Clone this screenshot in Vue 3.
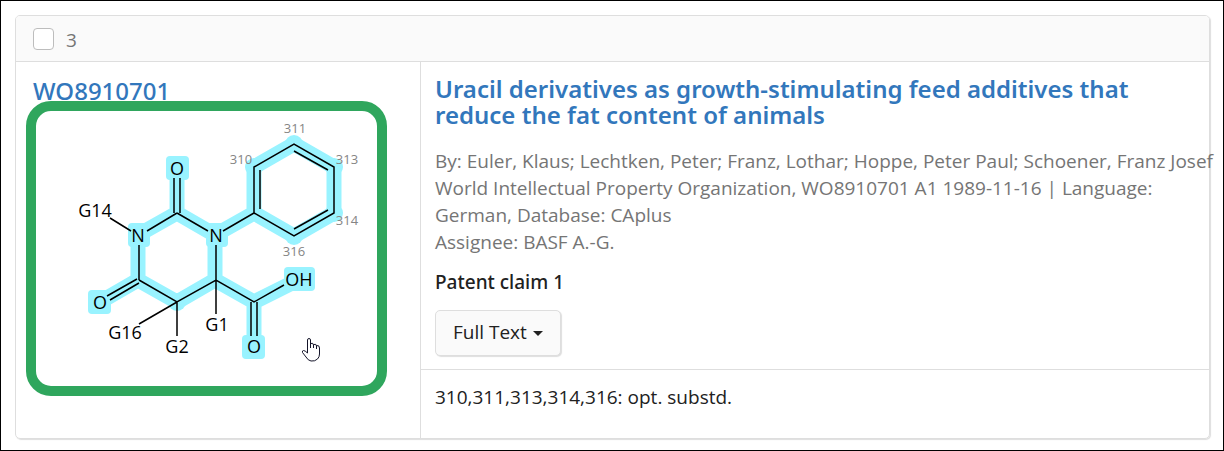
<script setup>
import { ref } from 'vue'

const selected = ref(false)

const highlightPath =
  'M177 168V213L138 235V280L100 302M177 213L215 235V280L177 302L138 280M215 280L254 302V346M254 302L298 280M215 235L254 213V167L294 144L334 167V213L294 236L254 213'

const halos = [
  [254, 167], [294, 144], [334, 167], [334, 213], [294, 236], [177, 302],
]

const boxes = [
  { x: 166, y: 156, w: 23 },
  { x: 128, y: 223, w: 22 },
  { x: 206, y: 223, w: 22 },
  { x: 88, y: 290, w: 23 },
  { x: 242, y: 335, w: 23 },
  { x: 284, y: 267, w: 31 },
]

const bonds =
  'M174 178V213M180 178V213M177 213L147 231M177 213L208 231M110 218L131 231M139 245V280M216 245V280M137 279L107 296M139 283L110 300M139 280L177 302L216 280L254 302L284 285M216 280V314M177 302V336M177 302L139 324M251 302V336M257 302V336M223 231L254 213V167L294 144L334 167V213L294 236L254 213M260 170V209M294 151L328 170M328 210L294 229'

const atoms = [
  { t: 'O', x: 177, y: 175 }, { t: 'G14', x: 95, y: 217 },
  { t: 'N', x: 138, y: 242 }, { t: 'N', x: 216, y: 242 },
  { t: 'O', x: 100, y: 309 }, { t: 'OH', x: 299, y: 286 },
  { t: 'O', x: 254, y: 353 }, { t: 'G16', x: 125, y: 339 },
  { t: 'G2', x: 177, y: 353 }, { t: 'G1', x: 217, y: 331 },
]

const locants = [
  { t: '311', x: 295, y: 133 }, { t: '310', x: 241, y: 164 },
  { t: '313', x: 347, y: 164 }, { t: '314', x: 347, y: 225 },
  { t: '316', x: 294, y: 256 },
]
</script>

<template>
  <main class="page">
    <article class="card">
      <header class="card-head">
        <input id="result-3" v-model="selected" type="checkbox" class="tick" />
        <label for="result-3">3</label>
      </header>
      <div class="card-body">
        <section class="structure">
          <a href="#WO8910701" class="patent-link">WO8910701</a>
          <div class="frame">
            <svg viewBox="36 111 341 275" role="img" aria-label="Markush structure">
              <path :d="highlightPath" class="highlight" />
              <circle v-for="(h, i) in halos" :key="i" :cx="h[0]" :cy="h[1]" r="9" class="halo" />
              <rect v-for="(b, i) in boxes" :key="i" :x="b.x" :y="b.y" :width="b.w" height="24" rx="4" class="halo" />
              <path :d="bonds" class="bond" />
              <text v-for="(a, i) in atoms" :key="i" :x="a.x" :y="a.y" class="atom">{{ a.t }}</text>
              <text v-for="l in locants" :key="l.t" :x="l.x" :y="l.y" class="locant">{{ l.t }}</text>
              <path
                class="pointer"
                d="M307.500 353V340Q307.500 338.500 309 338.500Q310.500 338.500 310.500 340V348M310.500 343.500Q313.500 342.500 313.500 345V348M313.500 344.500Q316.500 343.500 316.500 346V349M316.500 345.500Q319.500 345 319.500 348V354Q319.500 357 317.500 359Q315 361.500 311 361Q308 360.500 306 357L302.500 352.500Q302 350.500 303.500 350.500Q305 350.500 307.500 353"
              />
            </svg>
          </div>
        </section>
        <section class="details">
          <div class="summary">
            <h2><a href="#record">Uracil derivatives as growth-stimulating feed additives that reduce the fat content of animals</a></h2>
            <p class="meta">
              <span class="authors">By: Euler, Klaus; Lechtken, Peter; Franz, Lothar; Hoppe, Peter Paul; Schoener, Franz Josef</span><br />
              World Intellectual Property Organization, WO8910701 A1 1989-11-16 | Language: German, Database: CAplus<br />
              Assignee: BASF A.-G.
            </p>
            <p class="claim">Patent claim 1</p>
            <button type="button" class="full-text">Full Text <span class="caret"></span></button>
          </div>
          <p class="note">310,311,313,314,316: opt. substd.</p>
        </section>
      </div>
    </article>
  </main>
</template>

<style>
body {
  margin: 0;
  background: #fff;
}
</style>

<style scoped>
.page {
  box-sizing: border-box;
  min-height: 100vh;
  padding: 14px 13px 11px 14px;
  border: 1px solid #000;
  font: 19px/27px "Open Sans", "Noto Sans", sans-serif;
  color: #212121;
}
.card {
  border: 1px solid #dedede;
  border-radius: 5px;
  box-shadow: 1px 1px 1px #dedede;
}
.card-head {
  display: flex;
  align-items: center;
  gap: 12px;
  height: 45px;
  padding: 0 17px;
  border-bottom: 1px solid #dedede;
  border-radius: 4px 4px 0 0;
  background: #fafafa;
  color: #757575;
}
.card-head label {
  padding-top: 3px;
}
.tick {
  appearance: none;
  box-sizing: border-box;
  width: 21px;
  height: 22px;
  margin: 0;
  border: 1px solid #bdbdbd;
  border-radius: 4px;
  background: #fff;
}
.tick:checked {
  background: #3277bc;
}
.card-body {
  display: grid;
  grid-template-columns: 405px minmax(0, 1fr);
}
.structure {
  padding: 19px 33px 42px 10px;
  border-right: 1px solid #dedede;
}
.patent-link {
  display: block;
  padding-left: 7px;
  font-family: "Noto Sans", "Open Sans", sans-serif;
  font-size: 24px;
  font-weight: 500;
  line-height: 20px;
}
a {
  color: #3277bc;
  text-decoration: none;
}
.frame {
  border: 10px solid #2fa65d;
  border-radius: 25px;
}
.frame svg {
  display: block;
  width: 100%;
}
.highlight {
  fill: none;
  stroke: #99f3ff;
  stroke-width: 15;
  stroke-linejoin: round;
}
.halo {
  fill: #99f3ff;
}
.bond {
  fill: none;
  stroke: #000;
  stroke-width: 1.5;
}
.atom {
  font-size: 18px;
  text-anchor: middle;
  fill: #000;
}
.locant {
  font-size: 13px;
  text-anchor: middle;
  fill: #858585;
}
.pointer {
  fill: #fff;
  stroke: #15152a;
  stroke-width: 1;
  stroke-linejoin: round;
}
.summary {
  padding: 14px 0 13px 14px;
  border-bottom: 1px solid #dedede;
}
h2 {
  margin: 0 0 20px;
  font-family: "Noto Sans", "Open Sans", sans-serif;
  font-size: 24px;
  font-weight: 600;
  line-height: 26px;
}
p {
  margin: 0;
}
.meta {
  color: #757575;
}
.authors {
  white-space: nowrap;
}
.claim {
  margin: 13px 0 14px;
  font-family: "Noto Sans", "Open Sans", sans-serif;
  font-weight: 500;
}
.full-text {
  display: flex;
  align-items: center;
  gap: 6px;
  height: 46px;
  padding: 0 17px 2px;
  border: 1px solid #dedede;
  border-radius: 5px;
  background: #fafafa;
  box-shadow: 1px 1px 1px #dedede;
  font: inherit;
  color: inherit;
}
.caret {
  margin-top: 2px;
  border: 5px solid transparent;
  border-top-color: #212121;
  border-bottom: 0;
}
.note {
  padding: 14px;
}
</style>
